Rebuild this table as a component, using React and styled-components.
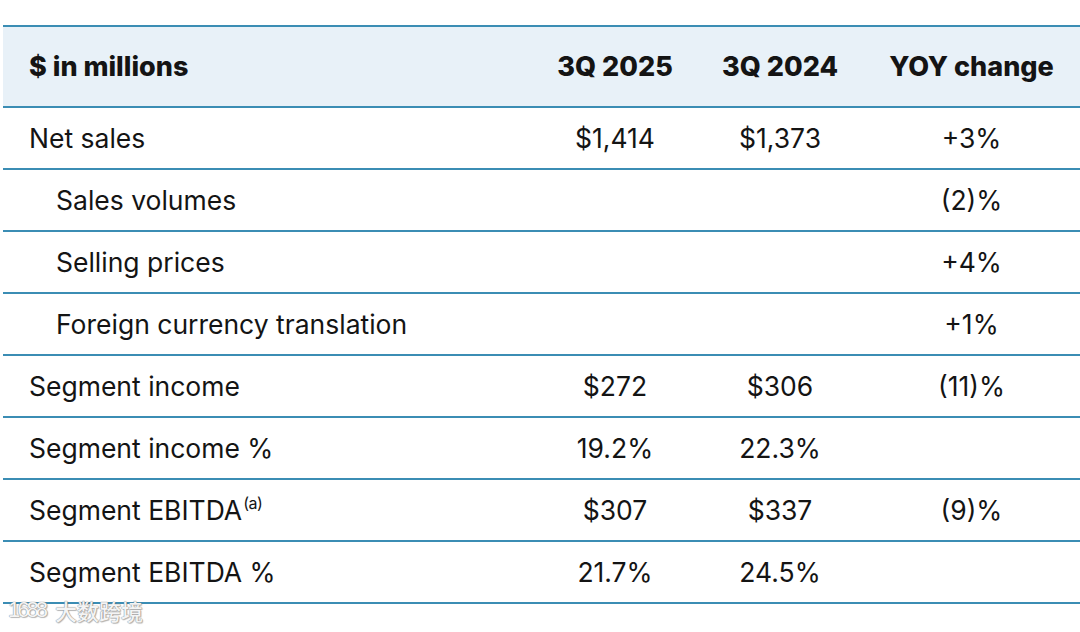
import styled, { createGlobalStyle } from 'styled-components';

const GlobalStyle = createGlobalStyle`
  html, body {
    margin: 0;
    padding: 0;
    background: #ffffff;
  }
  body {
    font-family: Inter, "Liberation Sans", Arial, sans-serif;
    color: #141414;
  }
`;

const Page = styled.div`
  position: relative;
  width: 1080px;
  height: 632px;
  overflow: hidden;
  padding: 25px 0 0 3px;
  box-sizing: border-box;
`;

const Table = styled.div`
  display: grid;
  grid-template-columns: 530px 164px 166px 217px;
  border-top: 2px solid #3b8db4;
`;

const Row = styled.div`
  display: contents;
`;

const Cell = styled.div`
  height: ${({ $header }) => ($header ? '79px' : '60px')};
  display: flex;
  align-items: center;
  justify-content: ${({ $label }) => ($label ? 'flex-start' : 'center')};
  padding-left: ${({ $label, $indent }) => ($label ? ($indent ? '53px' : '26px') : '0')};
  background: ${({ $header }) => ($header ? '#e8f1f8' : '#ffffff')};
  border-bottom: 2px solid #3b8db4;
  font-size: ${({ $header }) => ($header ? '27px' : '26.5px')};
  font-weight: ${({ $header }) => ($header ? 800 : 400)};
  letter-spacing: 0;
  white-space: nowrap;
`;

const Sup = styled.sup`
  font-size: 16px;
  position: relative;
  top: -7px;
  line-height: 0;
  margin-left: 1px;
  letter-spacing: -0.5px;
`;

const Watermark = styled.div`
  position: absolute;
  left: 8px;
  bottom: 6px;
  display: flex;
  align-items: center;
  gap: 10px;
  color: rgba(255, 255, 255, 0.92);
  font-family: "Noto Sans CJK SC", sans-serif;
  font-size: 22px;
  font-weight: 500;
  text-shadow: 0 0 1px #8a8a8a, 0 0 1px #8a8a8a, 1px 1px 1px rgba(0,0,0,0.25);
  pointer-events: none;
`;

const WaterLogo = styled.span`
  font-family: "Liberation Sans", sans-serif;
  font-size: 22px;
  letter-spacing: -3px;
`;

const rows = [
  { label: 'Net sales', a: '$1,414', b: '$1,373', c: '+3%' },
  { label: 'Sales volumes', indent: true, c: '(2)%' },
  { label: 'Selling prices', indent: true, c: '+4%' },
  { label: 'Foreign currency translation', indent: true, c: '+1%' },
  { label: 'Segment income', a: '$272', b: '$306', c: '(11)%' },
  { label: 'Segment income %', a: '19.2%', b: '22.3%' },
  { label: 'Segment EBITDA', note: '(a)', a: '$307', b: '$337', c: '(9)%' },
  { label: 'Segment EBITDA %', a: '21.7%', b: '24.5%' },
];

export default function App() {
  return (
    <>
      <GlobalStyle />
      <Page>
        <Table>
          <Row>
            <Cell $header $label>$ in millions</Cell>
            <Cell $header>3Q 2025</Cell>
            <Cell $header>3Q 2024</Cell>
            <Cell $header>YOY change</Cell>
          </Row>
          {rows.map((r) => (
            <Row key={r.label + (r.note || '')}>
              <Cell $label $indent={r.indent}>
                {r.label}
                {r.note && <Sup>{r.note}</Sup>}
              </Cell>
              <Cell>{r.a || ''}</Cell>
              <Cell>{r.b || ''}</Cell>
              <Cell>{r.c || ''}</Cell>
            </Row>
          ))}
        </Table>
        <Watermark>
          <WaterLogo>1688</WaterLogo>
          <span>大数跨境</span>
        </Watermark>
      </Page>
    </>
  );
}
